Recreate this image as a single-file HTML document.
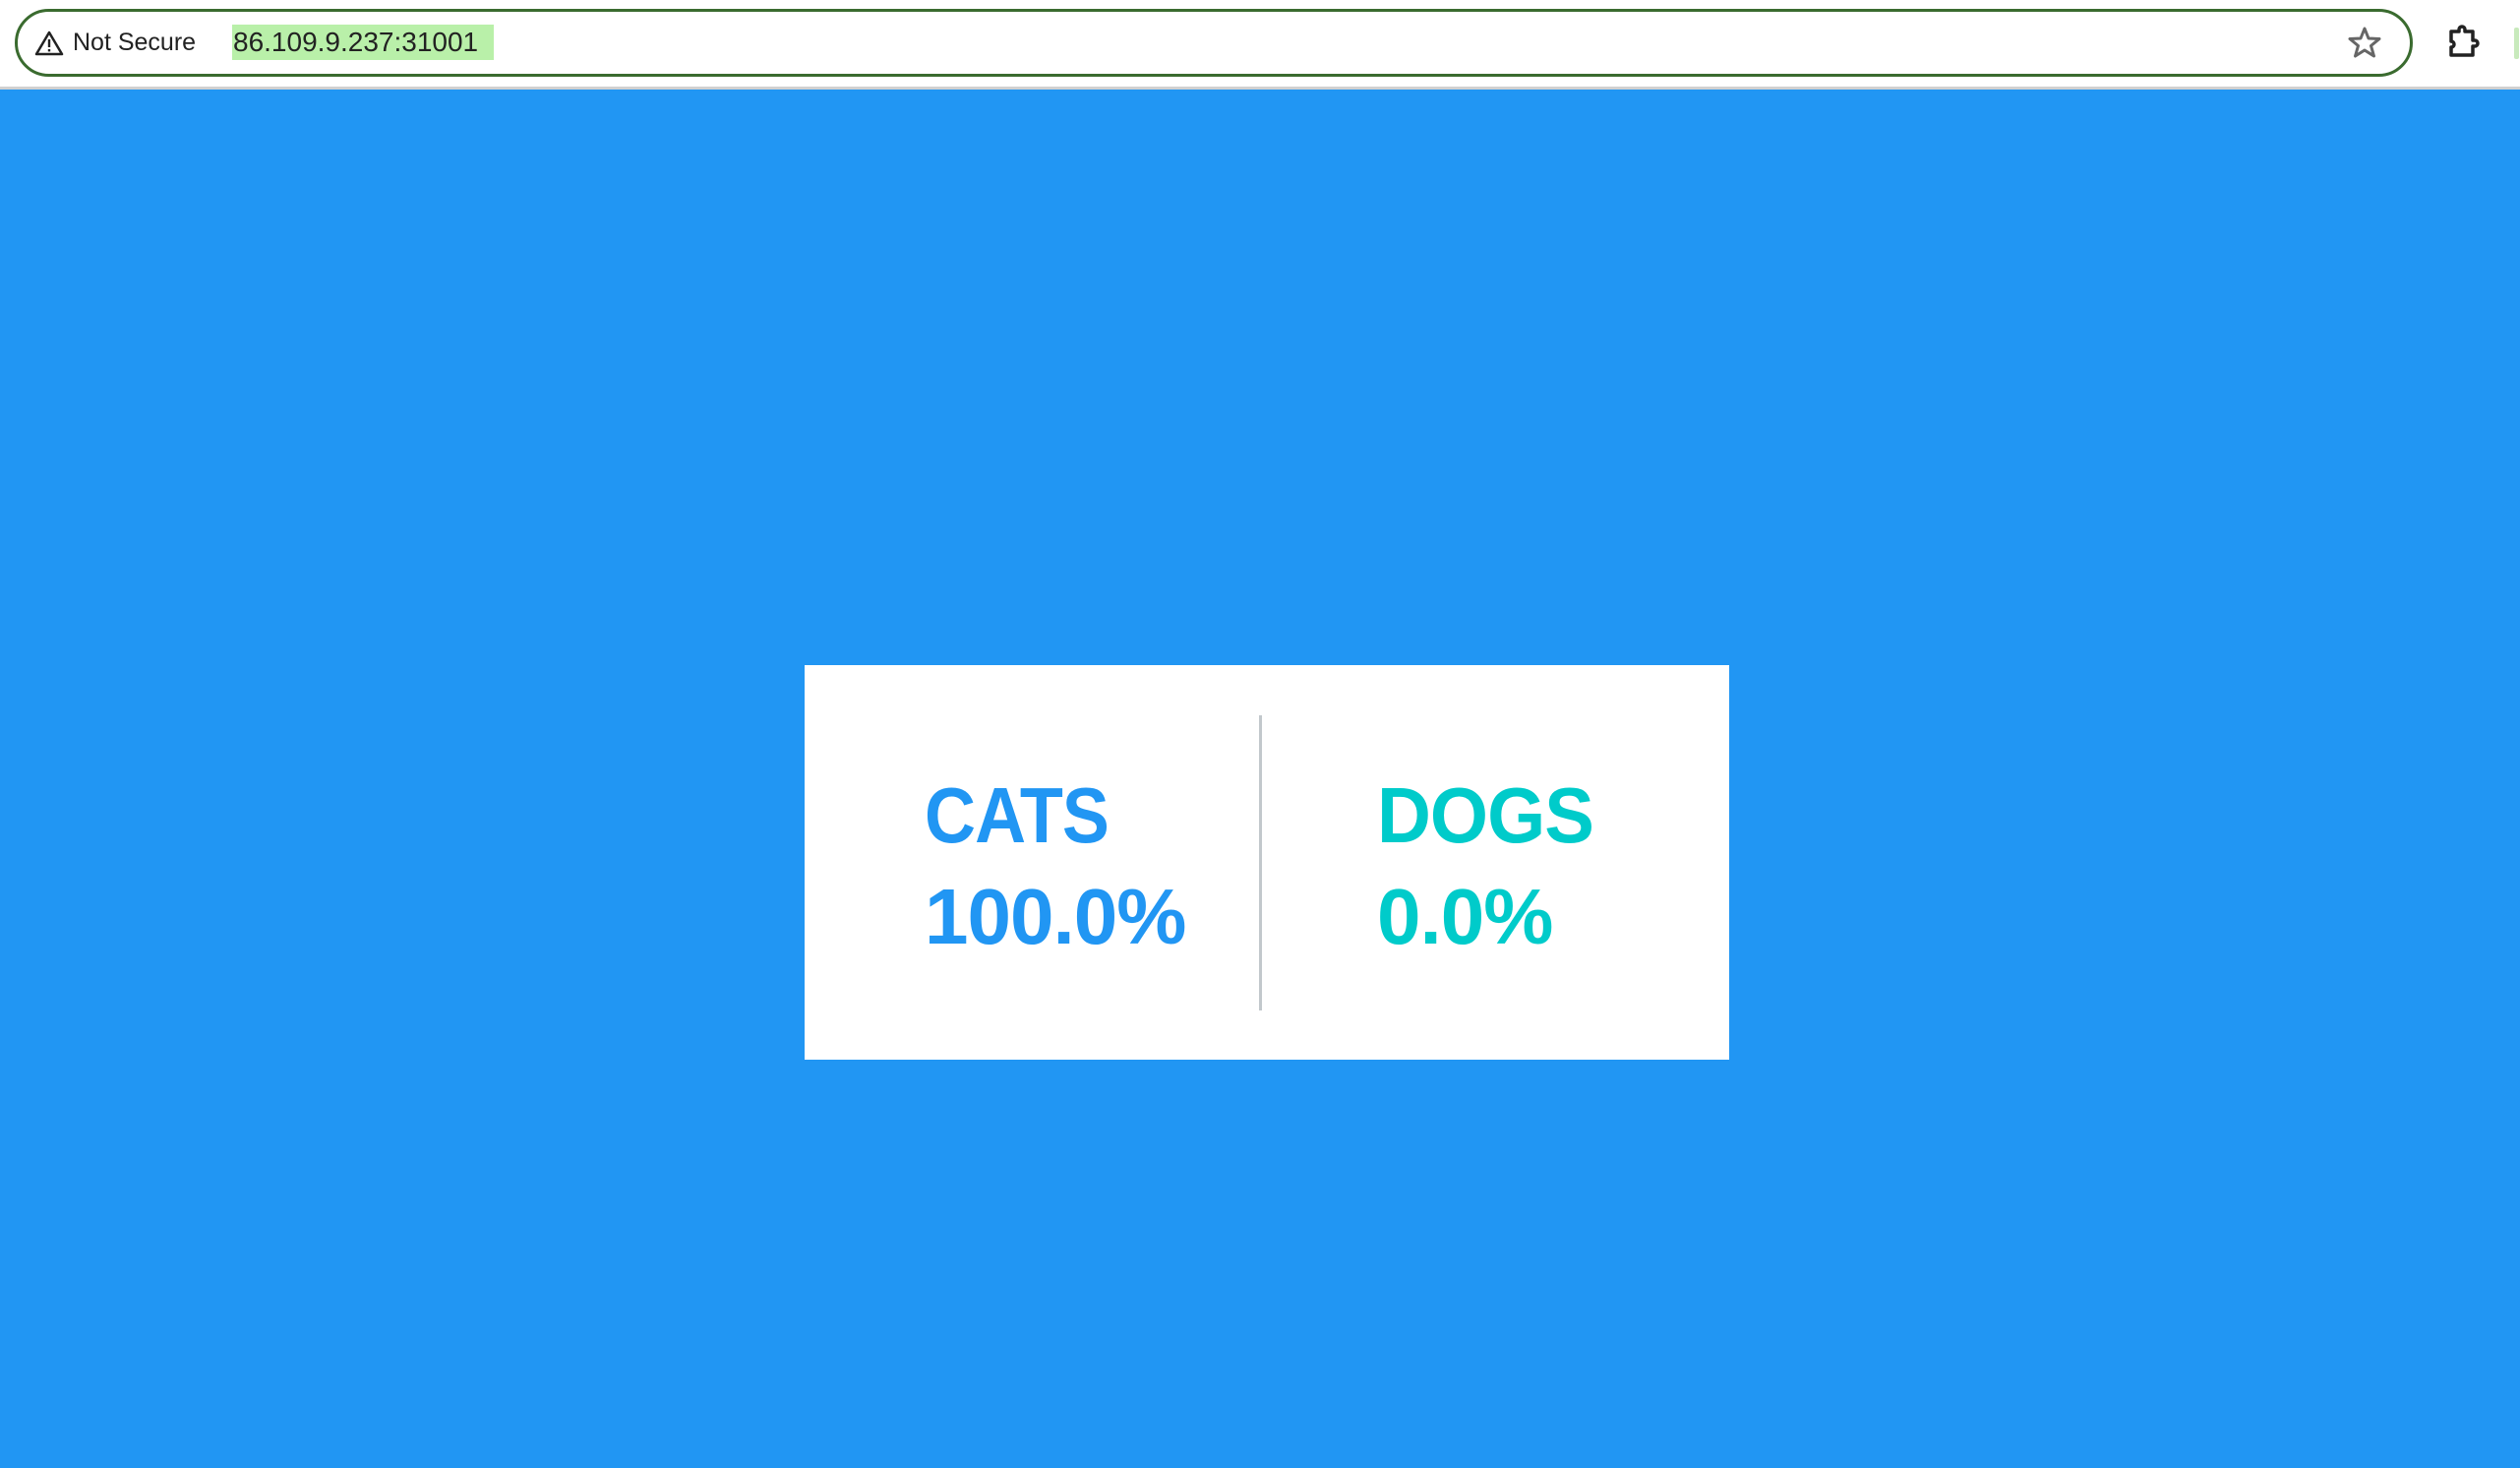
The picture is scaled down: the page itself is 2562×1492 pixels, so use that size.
<!DOCTYPE html>
<html><head><meta charset="utf-8"><style>
*{margin:0;padding:0;box-sizing:border-box}
body{width:2562px;height:1492px;overflow:hidden;background:#2196f3;font-family:"Liberation Sans",sans-serif;position:relative}
#top{position:absolute;left:0;top:0;width:2562px;height:91px;background:#fff;border-bottom:3px solid #d0d0d0}
#bar{position:absolute;left:15px;top:9px;width:2438px;height:69px;border:3px solid #3a6b2f;border-radius:35px}
.t{position:absolute;font-size:25px;color:#222;top:29px}
#url{position:absolute;left:236px;top:25px;height:36px;width:266px;background:#b9f0a9}
#card{position:absolute;left:818px;top:676px;width:940px;height:401px;background:#fff}
#div{position:absolute;left:1280px;top:727px;width:3px;height:300px;background:#c2c8cc}
.v{position:absolute;font-weight:bold;font-size:80px;line-height:1;letter-spacing:-1px;transform-origin:0 0}
</style></head><body>
<div id="top">
<div id="bar"></div>
<svg style="position:absolute;left:35px;top:31px" width="30" height="26" viewBox="0 0 30 26"><path d="M15 2 L28 24 H2 Z" fill="none" stroke="#222" stroke-width="2.5" stroke-linejoin="round"/><rect x="13.8" y="9" width="2.4" height="8" fill="#222"/><rect x="13.8" y="19" width="2.4" height="2.4" fill="#222"/></svg>
<div class="t" style="left:74px">Not Secure</div>
<div id="url"></div>
<div class="t" style="left:237px;font-size:28px;top:27px">86.109.9.237:31001</div>
<svg style="position:absolute;left:2387px;top:27px" width="34" height="32" viewBox="0 0 34 32"><path d="M17 2 L21 12 L32 12.5 L23.5 19.5 L26.5 30 L17 24 L7.5 30 L10.5 19.5 L2 12.5 L13 12 Z" fill="none" stroke="#666" stroke-width="3" stroke-linejoin="round"/></svg>
<svg style="position:absolute;left:2488px;top:24px" width="36" height="36" viewBox="0 0 36 36"><path d="M4 8 H12 V6 A3 3 0 0 1 18 6 V8 H26 V17 H28 A3 3 0 0 1 28 23 H26 V32 H4 V24 A3 3 0 0 0 4 18 Z" fill="none" stroke="#222" stroke-width="3.5" stroke-linejoin="round"/></svg>
<div style="position:absolute;left:2556px;top:28px;width:5px;height:32px;background:#c8eabc;border-radius:2px"></div>
</div>
<div id="card"></div>
<div id="div"></div>
<div class="v" style="left:940px;top:789px;color:#2196f3;transform:scaleX(0.9)">CATS</div>
<div class="v" style="left:940px;top:892px;color:#2196f3">100.0%</div>
<div class="v" style="left:1400px;top:789px;color:#00cbca;transform:scaleX(0.95)">DOGS</div>
<div class="v" style="left:1400px;top:892px;color:#00cbca">0.0%</div>
</body></html>
